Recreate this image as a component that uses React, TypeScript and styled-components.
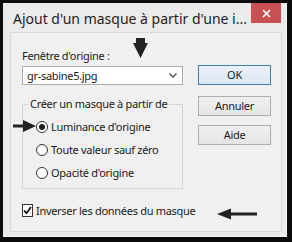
import React from 'react';
import styled, { createGlobalStyle } from 'styled-components';

const GlobalStyle = createGlobalStyle`
  html, body {
    margin: 0;
    padding: 0;
    background: #0c0c0c;
  }
  body {
    font-family: "Noto Sans", "Open Sans", sans-serif;
    font-size: 11px;
    letter-spacing: -0.3px;
    color: #1a1a1a;
  }
`;

const Screen = styled.div`
  width: 292px;
  height: 242px;
  padding: 3px 5px 5px 3px;
  box-sizing: border-box;
`;

const Window = styled.div`
  width: 284px;
  height: 234px;
  background: #ebebeb;
  box-shadow: inset -1px -1px 0 #f7f7f7;
  display: flex;
  flex-direction: column;
`;

const TitleBar = styled.div`
  height: 29px;
  display: flex;
  align-items: flex-start;
  justify-content: space-between;
`;

const Title = styled.div`
  font-size: 14px;
  letter-spacing: 0;
  line-height: 20px;
  padding: 6px 0 0 10px;
  color: #1e1e1e;
  white-space: nowrap;
`;

const CloseButton = styled.div`
  width: 30px;
  height: 20px;
  margin-right: 6px;
  background: #c75050;
  display: flex;
  align-items: center;
  justify-content: center;
`;

const Panel = styled.div`
  position: relative;
  flex: 1;
  margin: 0 5px 5px 7px;
  background: #f0f0f0;
  border: 1px solid #d9d9d9;
  box-sizing: border-box;
  padding: 14px 10px 0 11px;
  display: flex;
  gap: 15px;
`;

const LeftColumn = styled.div`
  width: 161px;
  display: flex;
  flex-direction: column;
`;

const FieldLabel = styled.div`
  line-height: 16px;
  margin-top: 1px;
  white-space: nowrap;
`;

const Select = styled.div`
  margin-top: 2px;
  height: 19px;
  box-sizing: border-box;
  background: #ffffff;
  border: 1px solid #acacac;
  display: flex;
  align-items: center;
  justify-content: space-between;
  padding: 0 5px 0 4px;
`;

const Group = styled.fieldset`
  margin: 11px 0 0;
  padding: 3px 0 4px 13px;
  border: 1px solid #d5d5d5;
  min-width: 0;
`;

const Legend = styled.legend`
  margin-left: -8px;
  padding: 0 2px;
  line-height: 16px;
  white-space: nowrap;
`;

const Option = styled.label`
  height: 23px;
  display: flex;
  align-items: center;
  gap: 3px;
  white-space: nowrap;
`;

const RadioCircle = styled.span<{ $checked?: boolean }>`
  width: 12px;
  height: 12px;
  box-sizing: border-box;
  border-radius: 50%;
  border: 1px solid #333333;
  background: #ffffff;
  display: flex;
  align-items: center;
  justify-content: center;
  &::after {
    content: '';
    display: ${(p) => (p.$checked ? 'block' : 'none')};
    width: 6px;
    height: 6px;
    border-radius: 50%;
    background: #1f1f1f;
  }
`;

const CheckRow = styled.label`
  margin-top: 11px;
  height: 20px;
  display: flex;
  align-items: center;
  gap: 3px;
  white-space: nowrap;
`;

const CheckBox = styled.span`
  width: 13px;
  height: 13px;
  box-sizing: border-box;
  border: 1px solid #333333;
  background: #ffffff;
  display: flex;
  align-items: center;
  justify-content: center;
`;

const ButtonColumn = styled.div`
  width: 73px;
  display: flex;
  flex-direction: column;
`;

const Button = styled.div<{ $default?: boolean; $gap: number }>`
  margin-top: ${(p) => p.$gap}px;
  height: 20px;
  box-sizing: border-box;
  border: 1px solid ${(p) => (p.$default ? '#3c7fb1' : '#adadad')};
  background: ${(p) =>
    p.$default ? 'linear-gradient(#eaf1f8, #dde8f3)' : 'linear-gradient(#f0f0f0, #e5e5e5)'};
  display: flex;
  align-items: center;
  justify-content: center;
  line-height: 16px;
`;

const Marker = styled.svg<{ $left: number; $top: number }>`
  position: absolute;
  left: ${(p) => p.$left}px;
  top: ${(p) => p.$top}px;
`;

export default function App() {
  return (
    <Screen>
      <GlobalStyle />
      <Window>
        <TitleBar>
          <Title>Ajout d'un masque à partir d'une i...</Title>
          <CloseButton>
            <svg width="9" height="9" viewBox="0 0 9 9">
              <path d="M1 1 L8 8 M8 1 L1 8" stroke="#ffffff" strokeWidth="1.6" />
            </svg>
          </CloseButton>
        </TitleBar>
        <Panel>
          <LeftColumn>
            <FieldLabel>Fenêtre d'origine :</FieldLabel>
            <Select>
              <span>gr-sabine5.jpg</span>
              <svg width="8" height="5" viewBox="0 0 8 5">
                <path d="M0.5 0.5 L4 4 L7.5 0.5" stroke="#555555" strokeWidth="1.4" fill="none" />
              </svg>
            </Select>
            <Group>
              <Legend>Créer un masque à partir de</Legend>
              <Option>
                <RadioCircle $checked />
                Luminance d'origine
              </Option>
              <Option>
                <RadioCircle />
                Toute valeur sauf zéro
              </Option>
              <Option>
                <RadioCircle />
                Opacité d'origine
              </Option>
            </Group>
            <CheckRow>
              <CheckBox>
                <svg width="9" height="9" viewBox="0 0 9 9">
                  <path d="M1 4.5 L3.5 7.2 L8 1" stroke="#111111" strokeWidth="1.8" fill="none" />
                </svg>
              </CheckBox>
              Inverser les données du masque
            </CheckRow>
          </LeftColumn>
          <ButtonColumn>
            <Button $default $gap={18}>OK</Button>
            <Button $gap={11}>Annuler</Button>
            <Button $gap={9}>Aide</Button>
          </ButtonColumn>
          <Marker $left={122} $top={5} width="15" height="20" viewBox="0 0 15 20">
            <path d="M3 0 H12 V5 H15 L7.5 20 L0 5 H3 Z" fill="#222222" />
          </Marker>
          <Marker $left={2} $top={87} width="23" height="12" viewBox="0 0 23 12">
            <path d="M0 4.5 H10 V0 L23 6 L10 12 V7.5 H0 Z" fill="#222222" />
          </Marker>
          <Marker $left={206} $top={175} width="40" height="12" viewBox="0 0 40 12">
            <path d="M0 6 L14 0.5 V4.5 H40 V7.5 H14 V11.5 Z" fill="#222222" />
          </Marker>
        </Panel>
      </Window>
    </Screen>
  );
}
